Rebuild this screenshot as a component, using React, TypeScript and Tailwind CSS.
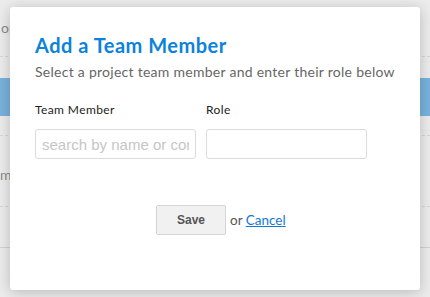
export default function App() {
  return (
    <div className="relative h-[297px] w-[430px] overflow-hidden bg-[#ececec] font-['Lato',sans-serif]">
      {/* page behind the overlay */}
      <div className="flex flex-col">
        <div className="h-[57px] border-b border-dashed border-[#d6d6d6] pl-[1px] pt-[17px] text-[14px] text-[#8a8a8a]">op</div>
        <div className="h-[21px]" />
        <div className="h-[38px] bg-[#79b2dc]" />
        <div className="h-[20px] border-b border-dashed border-[#d6d6d6]" />
        <div className="h-[71px] border-b border-dashed border-[#d6d6d6] pt-[28px] text-[14px] text-[#8a8a8a]">m</div>
        <div className="h-[41px] border-b border-[#d2d2d2]" />
      </div>

      {/* modal */}
      <div className="absolute left-[10px] top-[7px] flex h-[283px] w-[410px] flex-col rounded-[3px] bg-white px-[25px] pt-[26px] shadow-[0_2px_14px_rgba(0,0,0,0.22)]">
        <h2 className="text-[20px] font-bold leading-[24px] tracking-[0.5px] text-[#0b82dc]">Add a Team Member</h2>
        <p className="mt-[6px] text-[14px] leading-[18px] tracking-[0.27px] text-[#666]">
          Select a project team member and enter their role below
        </p>

        <div className="mt-[21px] flex gap-[10px]">
          <div className="flex w-[161px] flex-col">
            <label className="text-[12px] leading-[15px] tracking-[0.4px] text-[#222]">Team Member</label>
            <input
              placeholder="search by name or company"
              className="mt-[12px] h-[30px] w-full rounded-[3px] border border-[#dcdcdc] px-[6px] font-['Liberation_Sans',sans-serif] text-[15px] outline-none placeholder:text-[#c6c6c6]"
            />
          </div>
          <div className="flex w-[161px] flex-col">
            <label className="text-[12px] leading-[15px] tracking-[0.4px] text-[#222]">Role</label>
            <input className="mt-[12px] h-[30px] w-full rounded-[3px] border border-[#dcdcdc] px-[6px] text-[14px] outline-none" />
          </div>
        </div>

        <div className="mt-[46px] flex items-center gap-[4px] pl-[121px]">
          <button className="h-[30px] w-[70px] rounded-[2px] border border-[#d4d4d4] bg-[#f1f1f1] font-['Liberation_Sans',sans-serif] text-[12px] font-bold text-[#555]">
            Save
          </button>
          <span className="text-[13.5px] text-[#555]">
            or{' '}
            <a href="#" className="text-[#1477d6] underline">
              Cancel
            </a>
          </span>
        </div>
      </div>
    </div>
  )
}
